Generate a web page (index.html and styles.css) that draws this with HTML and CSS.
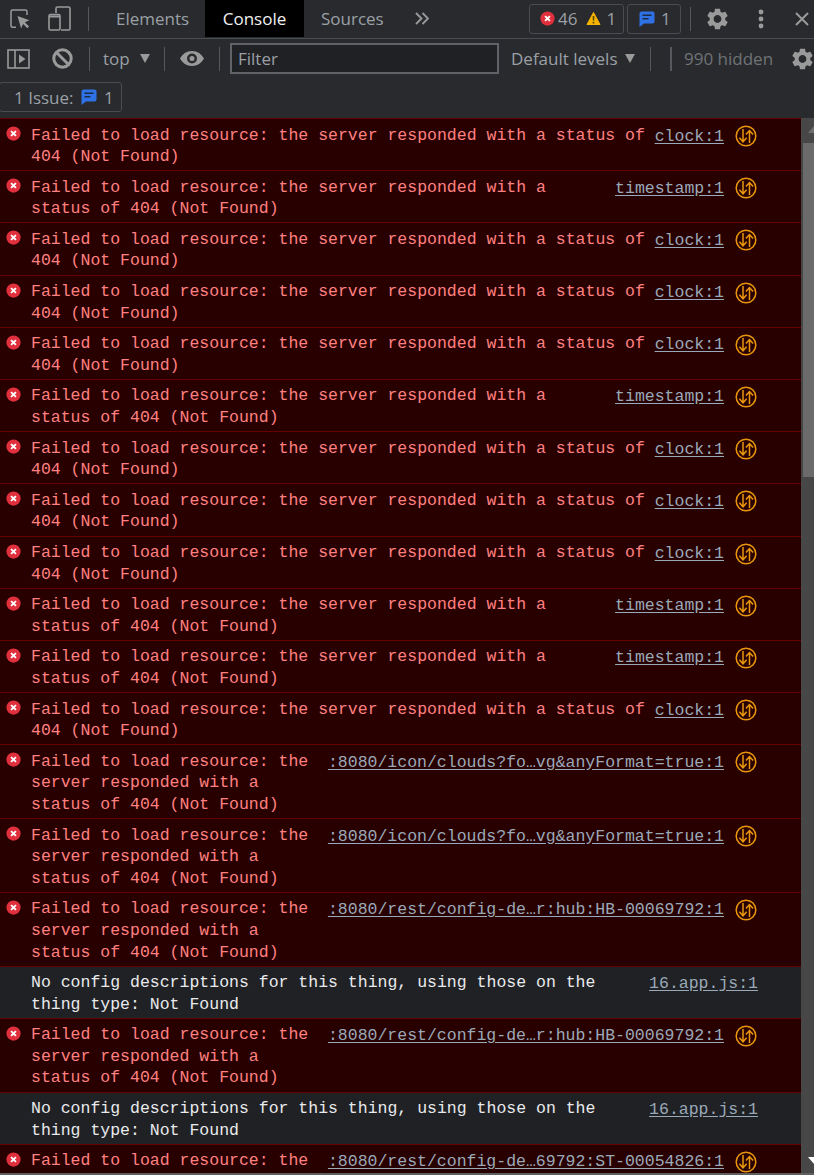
FILE: index.html
```html
<!DOCTYPE html>
<html lang="en">
<head>
<meta charset="utf-8">
<title>Console</title>
<link rel="stylesheet" href="styles.css">
</head>
<body>
<svg class="defs" width="0" height="0" aria-hidden="true">
  <defs>
    <symbol id="err" viewBox="0 0 16 16"><circle cx="8" cy="8" r="7.6" fill="#e0303e"/><path d="M5.400 5.400l5.200 5.200M10.600 5.400l-5.200 5.200" stroke="#fff" stroke-width="2" fill="none"/></symbol>
    <symbol id="net" viewBox="0 0 22 22"><circle cx="11" cy="11" r="9.800" fill="none" stroke="#e8960c" stroke-width="1.500"/><path d="M8 4v12.500M4.400 12.800L8 16.800l3.600-4M14.500 18V5.800M10.900 9.600l3.600-4 3.600 4" fill="none" stroke="#e8960c" stroke-width="1.500"/></symbol>
    <symbol id="msg" viewBox="0 0 16 16"><path d="M2.500 0.500h11a2 2 0 0 1 2 2v8a2 2 0 0 1-2 2H5L0.500 16V2.500a2 2 0 0 1 2-2z" fill="#2f72e6"/><path d="M3.500 4.200h9M3.500 7.800h6" stroke="#1d2a44" stroke-width="1.600" fill="none"/></symbol>
    <symbol id="gear" viewBox="2.400 1.800 19.200 20.400"><path fill="#9a9a9a" d="M19.140 12.940c.04-.3.06-.61.06-.94 0-.32-.02-.64-.07-.94l2.030-1.580c.18-.14.23-.41.12-.61l-1.920-3.320c-.12-.22-.37-.29-.59-.22l-2.390.96c-.5-.38-1.030-.7-1.620-.94l-.36-2.540c-.04-.24-.24-.41-.48-.41h-3.840c-.24 0-.43.17-.47.41l-.36 2.540c-.59.24-1.130.57-1.620.94l-2.390-.96c-.22-.08-.47 0-.59.22L2.740 8.870c-.12.21-.08.47.12.61l2.030 1.580c-.05.3-.09.63-.09.94s.02.64.07.94l-2.030 1.580c-.18.14-.23.41-.12.61l1.920 3.320c.12.22.37.29.59.22l2.390-.96c.5.38 1.030.7 1.620.94l.36 2.540c.05.24.24.41.48.41h3.840c.24 0 .44-.17.47-.41l.36-2.540c.59-.24 1.130-.56 1.620-.94l2.390.96c.22.08.47 0 .59-.22l1.920-3.320c.12-.22.07-.47-.12-.61l-2.010-1.580zM12 15.600c-1.980 0-3.600-1.620-3.600-3.600s1.620-3.600 3.600-3.600 3.600 1.620 3.600 3.600-1.620 3.600-3.600 3.600z"/></symbol>
  </defs>
</svg>
<div class="devtools">
  <header class="tabbar">
    <svg class="ic-inspect" width="20" height="20" viewBox="0 0 20 20"><path d="M6 18.200H2.500A1.500 1.500 0 0 1 1 16.700V2.500A1.500 1.500 0 0 1 2.500 1h13A1.500 1.500 0 0 1 17 2.500V6" fill="none" stroke="#9a9a9a" stroke-width="1.500"/><path d="M7.500 7l12 4.200-4.600 2 4.200 4.200-1.800 1.800-4.200-4.200-2 4.600z" fill="#9a9a9a"/></svg>
    <svg class="ic-device" width="23" height="25" viewBox="0 0 23 25"><path d="M8 7V2.500A1.500 1.500 0 0 1 9.500 1h11A1.500 1.500 0 0 1 22 2.500v20a1.500 1.500 0 0 1-1.500 1.500H13" fill="none" stroke="#9a9a9a" stroke-width="1.600"/><rect x="1" y="8.500" width="11" height="15.500" rx="1.500" fill="none" stroke="#9a9a9a" stroke-width="1.600"/><path d="M1 10.500h11" stroke="#9a9a9a" stroke-width="2"/></svg>
    <span class="vr vr-tabs"></span>
    <span class="tab tab-elements">Elements</span>
    <span class="tab tab-active">Console</span>
    <span class="tab tab-sources">Sources</span>
    <svg class="more" width="14" height="13" viewBox="0 0 14 13"><path d="M1 1l5.500 5.500L1 12M7.500 1L13 6.500 7.500 12" fill="none" stroke="#9a9a9a" stroke-width="1.900"/></svg>
    <span class="counts counts-errors">
      <svg class="count-ic" width="15" height="15"><use href="#err"/></svg><span class="count-n n-err">46</span>
      <svg class="count-warn" width="15" height="15" viewBox="0 0 15 15"><path d="M7.500 1.500L14 13.500H1z" fill="#f5b400" stroke="#f5b400" stroke-linejoin="round"/><path d="M7.500 5v4.500M7.500 10.700v1.700" stroke="#5a4800" stroke-width="1.600"/></svg><span class="count-n n-warn">1</span>
    </span>
    <span class="counts counts-info">
      <svg class="count-ic" width="16" height="16"><use href="#msg"/></svg><span class="count-n n-info">1</span>
    </span>
    <span class="vr vr-counts"></span>
    <svg class="ic-gear" width="21" height="22"><use href="#gear"/></svg>
    <svg class="ic-dots" width="6" height="20" viewBox="0 0 6 20"><circle cx="3" cy="3" r="2.400" fill="#9a9a9a"/><circle cx="3" cy="10" r="2.400" fill="#9a9a9a"/><circle cx="3" cy="17" r="2.400" fill="#9a9a9a"/></svg>
    <svg class="ic-close" width="14" height="14" viewBox="0 0 14 14"><path d="M1 1l12 12M13 1L1 13" stroke="#9a9a9a" stroke-width="2"/></svg>
  </header>
  <div class="filterbar">
    <svg class="ic-side" width="23" height="20" viewBox="0 0 23 20"><rect x="1" y="1" width="21" height="18" fill="none" stroke="#9a9a9a" stroke-width="1.600"/><path d="M8 1v18" stroke="#9a9a9a" stroke-width="1.600"/><path d="M12 5.500l6.500 4.500-6.500 4.500z" fill="#9a9a9a"/></svg>
    <svg class="ic-block" width="21" height="21" viewBox="0 0 21 21"><circle cx="10.500" cy="10.500" r="8.700" fill="none" stroke="#9a9a9a" stroke-width="3"/><path d="M4.500 4.500l12 12" stroke="#9a9a9a" stroke-width="3"/></svg>
    <span class="vr vr-a"></span>
    <span class="ctx">top</span>
    <span class="caret"></span>
    <span class="vr vr-b"></span>
    <svg class="ic-eye" width="24" height="15" viewBox="0 0 24 15"><path fill="#9a9a9a" fill-rule="evenodd" d="M12 0C6.500 0 2.500 3 0 7.500 2.500 12 6.500 15 12 15s9.500-3 12-7.500C21.500 3 17.500 0 12 0zm0 2.500a5 5 0 1 1 0 10 5 5 0 0 1 0-10zm0 2.500a2.500 2.500 0 1 0 0 5 2.500 2.500 0 0 0 0-5z"/></svg>
    <span class="vr vr-c"></span>
    <span class="filter">Filter</span>
    <span class="levels">Default levels</span>
    <span class="caret"></span>
    <span class="vr vr-d"></span>
    <span class="vr vr-e"></span>
    <span class="hidden-count">990 hidden</span>
    <svg class="ic-gear2" width="21" height="22"><use href="#gear"/></svg>
  </div>
  <div class="issuebar">
    <span class="issue-btn"><span class="issue-label">1 Issue:</span><svg class="issue-ic" width="16" height="16"><use href="#msg"/></svg><span class="issue-n">1</span></span>
  </div>
  <div class="viewport">
    <main class="log">
      <div class="row err"><svg class="e-ic" width="15" height="15"><use href="#err"/></svg><div class="msg">Failed to load resource: the server responded with a status of<br>404 (Not Found)</div><a class="src">clock:1</a><svg class="net-ic" width="22" height="22"><use href="#net"/></svg></div>
      <div class="row err"><svg class="e-ic" width="15" height="15"><use href="#err"/></svg><div class="msg">Failed to load resource: the server responded with a<br>status of 404 (Not Found)</div><a class="src">timestamp:1</a><svg class="net-ic" width="22" height="22"><use href="#net"/></svg></div>
      <div class="row err"><svg class="e-ic" width="15" height="15"><use href="#err"/></svg><div class="msg">Failed to load resource: the server responded with a status of<br>404 (Not Found)</div><a class="src">clock:1</a><svg class="net-ic" width="22" height="22"><use href="#net"/></svg></div>
      <div class="row err"><svg class="e-ic" width="15" height="15"><use href="#err"/></svg><div class="msg">Failed to load resource: the server responded with a status of<br>404 (Not Found)</div><a class="src">clock:1</a><svg class="net-ic" width="22" height="22"><use href="#net"/></svg></div>
      <div class="row err"><svg class="e-ic" width="15" height="15"><use href="#err"/></svg><div class="msg">Failed to load resource: the server responded with a status of<br>404 (Not Found)</div><a class="src">clock:1</a><svg class="net-ic" width="22" height="22"><use href="#net"/></svg></div>
      <div class="row err"><svg class="e-ic" width="15" height="15"><use href="#err"/></svg><div class="msg">Failed to load resource: the server responded with a<br>status of 404 (Not Found)</div><a class="src">timestamp:1</a><svg class="net-ic" width="22" height="22"><use href="#net"/></svg></div>
      <div class="row err"><svg class="e-ic" width="15" height="15"><use href="#err"/></svg><div class="msg">Failed to load resource: the server responded with a status of<br>404 (Not Found)</div><a class="src">clock:1</a><svg class="net-ic" width="22" height="22"><use href="#net"/></svg></div>
      <div class="row err"><svg class="e-ic" width="15" height="15"><use href="#err"/></svg><div class="msg">Failed to load resource: the server responded with a status of<br>404 (Not Found)</div><a class="src">clock:1</a><svg class="net-ic" width="22" height="22"><use href="#net"/></svg></div>
      <div class="row err"><svg class="e-ic" width="15" height="15"><use href="#err"/></svg><div class="msg">Failed to load resource: the server responded with a status of<br>404 (Not Found)</div><a class="src">clock:1</a><svg class="net-ic" width="22" height="22"><use href="#net"/></svg></div>
      <div class="row err"><svg class="e-ic" width="15" height="15"><use href="#err"/></svg><div class="msg">Failed to load resource: the server responded with a<br>status of 404 (Not Found)</div><a class="src">timestamp:1</a><svg class="net-ic" width="22" height="22"><use href="#net"/></svg></div>
      <div class="row err"><svg class="e-ic" width="15" height="15"><use href="#err"/></svg><div class="msg">Failed to load resource: the server responded with a<br>status of 404 (Not Found)</div><a class="src">timestamp:1</a><svg class="net-ic" width="22" height="22"><use href="#net"/></svg></div>
      <div class="row err"><svg class="e-ic" width="15" height="15"><use href="#err"/></svg><div class="msg">Failed to load resource: the server responded with a status of<br>404 (Not Found)</div><a class="src">clock:1</a><svg class="net-ic" width="22" height="22"><use href="#net"/></svg></div>
      <div class="row err"><svg class="e-ic" width="15" height="15"><use href="#err"/></svg><div class="msg">Failed to load resource: the<br>server responded with a<br>status of 404 (Not Found)</div><a class="src">:8080/icon/clouds?fo…vg&amp;anyFormat=true:1</a><svg class="net-ic" width="22" height="22"><use href="#net"/></svg></div>
      <div class="row err"><svg class="e-ic" width="15" height="15"><use href="#err"/></svg><div class="msg">Failed to load resource: the<br>server responded with a<br>status of 404 (Not Found)</div><a class="src">:8080/icon/clouds?fo…vg&amp;anyFormat=true:1</a><svg class="net-ic" width="22" height="22"><use href="#net"/></svg></div>
      <div class="row err"><svg class="e-ic" width="15" height="15"><use href="#err"/></svg><div class="msg">Failed to load resource: the<br>server responded with a<br>status of 404 (Not Found)</div><a class="src">:8080/rest/config-de…r:hub:HB-00069792:1</a><svg class="net-ic" width="22" height="22"><use href="#net"/></svg></div>
      <div class="row plain"><div class="msg">No config descriptions for this thing, using those on the<br>thing type: Not Found</div><a class="src">16.app.js:1</a></div>
      <div class="row err"><svg class="e-ic" width="15" height="15"><use href="#err"/></svg><div class="msg">Failed to load resource: the<br>server responded with a<br>status of 404 (Not Found)</div><a class="src">:8080/rest/config-de…r:hub:HB-00069792:1</a><svg class="net-ic" width="22" height="22"><use href="#net"/></svg></div>
      <div class="row plain"><div class="msg">No config descriptions for this thing, using those on the<br>thing type: Not Found</div><a class="src">16.app.js:1</a></div>
      <div class="row err row-last"><svg class="e-ic" width="15" height="15"><use href="#err"/></svg><div class="msg">Failed to load resource: the</div><a class="src">:8080/rest/config-de…69792:ST-00054826:1</a><svg class="net-ic" width="22" height="22"><use href="#net"/></svg></div>
    </main>
    <div class="scrollbar">
      <span class="sb-up"></span>
      <span class="sb-thumb"></span>
      <span class="sb-down"></span>
    </div>
  </div>
</div>
</body>
</html>
```

FILE: styles.css
```css
* { box-sizing: border-box; }
html, body { margin: 0; padding: 0; height: 100%; overflow: hidden; background: #292a2d; }
.defs { display: block; height: 0; }
.devtools { display: flex; flex-direction: column; height: 1175px; font-family: "Open Sans", "Noto Sans", sans-serif; font-size: 17px; color: #9aa0a6; }
.tabbar > *, .filterbar > * { flex: none; }

.tabbar { display: flex; align-items: center; height: 39px; flex: none; border-bottom: 1px solid #494c50; padding-bottom: 1px; }
.ic-inspect { margin-left: 10px; }
.ic-device { margin-left: 18px; }
.vr { display: block; width: 1px; height: 24px; background: #55585c; }
.vr-tabs { margin-left: 17px; }
.tab { display: flex; align-items: center; height: 37px; }
.tab-elements { margin-left: 27px; width: 89px; }
.tab-active { background: #000; color: #f1f1f1; width: 99px; justify-content: center; }
.tab-sources { margin-left: 17px; width: 78px; }
.more { margin-left: 16px; margin-bottom: 1px; }
.counts { display: flex; align-items: center; height: 30px; border: 1px solid #494c50; border-radius: 3px; }
.counts-errors { margin-left: 100px; width: 95px; padding-left: 10px; }
.counts-info { margin-left: 3px; width: 54px; padding-left: 11px; }
.count-ic, .count-warn { flex: none; }
.n-err { margin-left: 3px; }
.count-warn { margin-left: 9px; }
.n-warn { margin-left: 5px; }
.n-info { margin-left: 6px; }
.vr-counts { margin-left: 9px; }
.ic-gear { margin-left: 16px; }
.ic-dots { margin-left: 30px; }
.ic-close { margin-left: 31px; }

.filterbar { display: flex; align-items: center; height: 39px; flex: none; }
.ic-side { margin-left: 7px; }
.ic-block { margin-left: 22px; }
.vr-a { margin-left: 16px; }
.ctx { margin-left: 13px; width: 37px; }
.caret { display: block; width: 0; height: 0; margin-right: 1px; border-left: 5px solid transparent; border-right: 5px solid transparent; border-top: 9px solid #9a9a9a; }
.vr-b { margin-left: 13px; }
.ic-eye { margin-left: 15px; }
.vr-c { margin-left: 15px; }
.filter { margin-left: 10px; display: flex; align-items: center; width: 269px; height: 31px; padding-left: 6px; background: #202124; border: 2px solid #5f6368; }
.levels { margin-left: 12px; width: 114px; }
.vr-d { margin-left: 14px; }
.vr-e { margin-left: 19px; width: 2px; }
.hidden-count { margin-left: 12px; color: #6f7377; width: 96px; }
.ic-gear2 { margin-left: 12px; }

.issuebar { display: flex; align-items: flex-start; height: 40px; flex: none; padding-top: 4px; }
.issue-btn { display: flex; align-items: center; height: 30px; width: 123px; padding-left: 14px; margin-left: -1px; border: 1px solid #494c50; border-radius: 3px; white-space: nowrap; }
.issue-label { width: 58px; flex: none; }
.issue-ic { flex: none; margin-left: 9px; }
.issue-n { margin-left: 7px; }

.viewport { display: flex; flex: 1; min-height: 0; overflow: hidden; border-bottom: 2px solid #5f5f5f; }
.log { flex: none; width: 801px; overflow: hidden; background: #202124; font-family: "Liberation Mono", monospace; font-size: 16.500px; line-height: 21.600px; }
.row { position: relative; display: flex; border-top: 1px solid #660000; padding: 5.500px 0 2.500px 31px; white-space: nowrap; }
.err { background: #290000; color: #ff8080; }
.plain { background: #202124; color: #e8eaed; padding-right: 43px; }
.row-last { min-height: 52px; }
.e-ic { position: absolute; left: 6px; top: 7px; }
.msg { flex: 1; min-width: 0; }
.src { flex: none; height: 22px; margin-top: 1px; color: #9aa9b8; text-decoration: underline; text-underline-offset: 2px; }
.net-ic { flex: none; margin-left: 11px; margin-right: 44px; margin-top: 0.500px; }

.scrollbar { position: relative; flex: 1; overflow: hidden; background: #474747; }
.sb-up, .sb-down { position: absolute; left: 7px; width: 0; height: 0; border-left: 6px solid transparent; border-right: 6px solid transparent; }
.sb-up { top: 8px; border-bottom: 7px solid #6f6f6f; }
.sb-down { bottom: 9px; border-top: 7px solid #fff; }
.sb-thumb { position: absolute; left: 2px; right: 0; top: 25px; height: 334px; background: #6b6b6b; }
```
